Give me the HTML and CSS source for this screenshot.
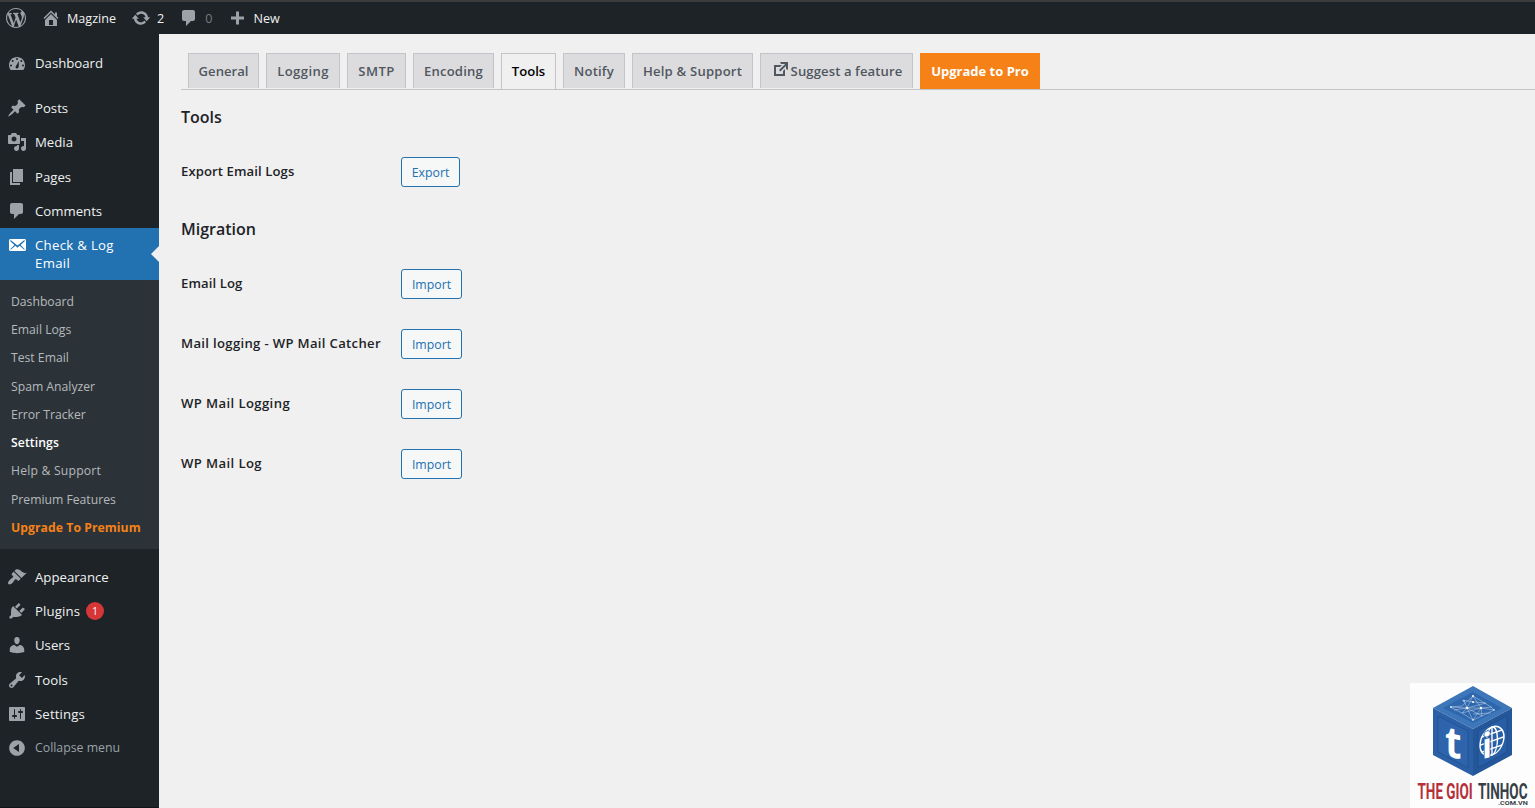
FILE: index.html
```html
<!DOCTYPE html>
<html lang="en">
<head>
<meta charset="utf-8">
<title>Settings – Check &amp; Log Email</title>
<link rel="stylesheet" href="styles.css">
</head>
<body>
<header class="adminbar">
  <svg class="ico wp" viewBox="0 0 20 20"><path d="M20 10c0-5.51-4.49-10-10-10C4.48 0 0 4.49 0 10c0 5.52 4.48 10 10 10 5.51 0 10-4.48 10-10zM7.78 15.37L4.37 6.22c.55-.02 1.17-.08 1.17-.08.5-.06.44-1.13-.06-1.11 0 0-1.45.11-2.37.11-.18 0-.37 0-.58-.01C4.12 2.69 6.87 1.11 10 1.11c2.33 0 4.45.87 6.05 2.34-.68-.11-1.65.39-1.65 1.58 0 .74.45 1.36.9 2.1.35.61.55 1.36.55 2.46 0 1.49-1.4 5-1.4 5l-3.03-8.37c.54-.02.82-.17.82-.17.5-.05.44-1.25-.06-1.22 0 0-1.44.12-2.38.12-.87 0-2.33-.12-2.33-.12-.5-.03-.56 1.2-.06 1.22l.92.08 1.26 3.41zM17.41 10c.24-.64.74-1.87.43-4.25.7 1.29 1.05 2.71 1.05 4.25 0 3.29-1.73 6.24-4.4 7.78.97-2.59 1.94-5.2 2.92-7.78zM6.1 18.09C3.12 16.65 1.11 13.53 1.11 10c0-1.3.23-2.48.72-3.59C3.25 10.3 4.67 14.2 6.1 18.09zm4.03-6.63l2.58 6.98c-.86.29-1.76.45-2.71.45-.79 0-1.57-.11-2.29-.33.81-2.38 1.62-4.74 2.42-7.1z"/></svg>
  <a class="bar-item site"><svg class="ico" viewBox="0 0 20 20"><path d="M16 8.5l1.53 1.53-1.06 1.06L10 4.6l-6.47 6.49-1.06-1.06L10 2.5l4 4v-2h2v4zm-6-2.46l6 5.99V18H4v-5.97zM12 17v-5H8v5h4z"/></svg><span>Magzine</span></a>
  <a class="bar-item updates"><svg class="ico" viewBox="0 0 20 20"><path d="M10.2 3.28c3.53 0 6.43 2.61 6.92 6h2.08l-3.5 4-3.5-4h2.32c-.45-1.97-2.21-3.45-4.32-3.45-1.45 0-2.73.71-3.54 1.78L4.95 5.66C6.23 4.2 8.11 3.28 10.2 3.28zm-.4 13.44c-3.52 0-6.43-2.61-6.92-6H.8l3.5-4c1.17 1.33 2.33 2.67 3.5 4H5.48c.45 1.97 2.21 3.45 4.32 3.45 1.45 0 2.73-.71 3.54-1.78l1.71 1.95c-1.28 1.46-3.15 2.38-5.25 2.38z"/></svg><span>2</span></a>
  <a class="bar-item pending"><svg class="ico" viewBox="0 0 20 20"><path d="M5 2h9c1.1 0 2 .9 2 2v7c0 1.1-.9 2-2 2h-2l-5 5v-5H5c-1.1 0-2-.9-2-2V4c0-1.1.9-2 2-2z"/></svg><span class="zero">0</span></a>
  <a class="bar-item new"><svg class="ico" viewBox="0 0 20 20"><path d="M17 8.500v3h-5v5H9v-5H4v-3h5v-5h3v5h5z"/></svg><span>New</span></a>
</header>
<div class="body">
  <nav class="sidebar">
    <a class="item"><svg class="ico" viewBox="0 0 20 20"><path fill-rule="evenodd" d="M3.76 17h12.48c1.1-1.37 1.76-3.11 1.76-5 0-4.42-3.58-8-8-8s-8 3.58-8 8c0 1.89.66 3.63 1.76 5zM9 6a1 1 0 1 1 2 0a1 1 0 1 1-2 0zM4.700 8a1 1 0 1 1 2 0a1 1 0 1 1-2 0zM3 12.500a1 1 0 1 1 2 0a1 1 0 1 1-2 0zM15 12.500a1 1 0 1 1 2 0a1 1 0 1 1-2 0zM13.300 8a1 1 0 1 1 2 0a1 1 0 1 1-2 0zM12 8L11.700 13.600C11.500 15 10.700 15.700 9.800 15.500C8.600 15.300 8.200 14.200 8.800 13.200z"/></svg><span>Dashboard</span></a>
    <div class="sep"></div>
    <a class="item"><svg class="ico" viewBox="0 0 20 20"><path d="M10.440 3.020l1.820-1.820 6.360 6.350-1.830 1.820c-1.050-.68-2.480-.57-3.410.36l-.75.75c-.92.93-1.040 2.350-.35 3.410l-1.830 1.820-2.410-2.410-2.800 2.790c-.42.42-3.380 2.710-3.800 2.290s1.860-3.390 2.280-3.810l2.790-2.790L4.100 9.360l1.830-1.820c1.050.69 2.480.57 3.400-.36l.75-.75c.93-.92 1.050-2.350.36-3.410z"/></svg><span>Posts</span></a>
    <a class="item"><svg class="ico" viewBox="0 0 20 20"><path d="M13 11V4c0-.55-.45-1-1-1h-1.670L9 1H5L3.670 3H2c-.55 0-1 .45-1 1v7c0 .55.45 1 1 1h10c.55 0 1-.45 1-1zM7 4.500c1.380 0 2.500 1.120 2.500 2.500S8.380 9.500 7 9.500 4.500 8.380 4.500 7 5.620 4.500 7 4.500zM14 6h5v10.500c0 1.380-1.120 2.500-2.500 2.500S14 17.880 14 16.500s1.120-2.500 2.500-2.500c.17 0 .34.02.5.05V9h-3V6zm-4 8.050V13h2v3.500c0 1.380-1.120 2.500-2.500 2.500S7 17.880 7 16.500 8.120 14 9.500 14c.17 0 .34.02.5.05z"/></svg><span>Media</span></a>
    <a class="item"><svg class="ico" viewBox="0 0 20 20"><path d="M6 15V2h10v13H6zm-1 1h8v2H3V5h2v11z"/></svg><span>Pages</span></a>
    <a class="item"><svg class="ico" viewBox="0 0 20 20"><path d="M5 2h9c1.100 0 2 .9 2 2v7c0 1.100-.9 2-2 2h-2l-5 5v-5H5c-1.100 0-2-.9-2-2V4c0-1.100.9-2 2-2z"/></svg><span>Comments</span></a>
    <a class="item current"><svg class="ico" viewBox="0 0 20 20"><path d="M19 14.500v-9c0-.83-.67-1.500-1.500-1.500H3.490c-.83 0-1.500.67-1.500 1.500v9c0 .83.67 1.500 1.500 1.500H17.500c.83 0 1.500-.67 1.500-1.500zm-1.310-9.110c.33.33.15.67-.03.84L13.600 9.950l3.900 4.060c.12.14.2.36.06.51-.13.16-.43.15-.56.05l-4.370-3.730-2.140 1.950-2.130-1.950-4.370 3.730c-.13.1-.43.11-.56-.05-.14-.15-.06-.37.06-.51l3.900-4.060-4.060-3.720c-.18-.17-.36-.51-.03-.84s.67-.17.95.07l6.240 5.040 6.250-5.040c.28-.24.62-.4.95-.07z"/></svg><span class="check">Check &amp; Log<br>Email</span></a>
    <div class="submenu">
      <a>Dashboard</a><a>Email Logs</a><a>Test Email</a><a>Spam Analyzer</a><a>Error Tracker</a><a class="on">Settings</a><a class="wide">Help &amp; Support</a><a>Premium Features</a><a class="upgrade">Upgrade To Premium</a>
    </div>
    <div class="sep"></div>
    <a class="item"><svg class="ico" viewBox="0 0 20 20"><path d="M14.480 11.060L7.410 3.990l1.500-1.500c.5-.56 2.300-.47 3.510.32 1.210.8 1.430 1.280 2.910 2.100 1.180.64 2.450 1.260 4.450.85zm-.71.71L6.700 4.700 4.930 6.470c-.39.39-.39 1.020 0 1.410l1.060 1.060c.39.39.39 1.030 0 1.420-.6.6-1.430 1.110-2.210 1.690-.35.26-.7.53-1.010.84C1.430 14.230.4 16.080 1.400 17.070c.99 1 2.840-.03 4.180-1.360.31-.31.58-.66.85-1.020.57-.78 1.080-1.610 1.690-2.210.39-.39 1.020-.39 1.410 0l1.060 1.060c.39.39 1.020.39 1.410 0z"/></svg><span>Appearance</span></a>
    <a class="item"><svg class="ico" viewBox="0 0 20 20"><path d="M13.110 4.360L9.870 7.600 8 5.730l3.240-3.240c.35-.34 1.050-.2 1.560.32.52.51.66 1.210.31 1.550zm-8 1.770l.91-1.120 9.010 9.010-1.190.84c-.71.71-2.630 1.160-3.820 1.160H6.140L4.900 17.260c-.59.59-1.540.59-2.120 0-.59-.58-.59-1.530 0-2.120l1.240-1.240v-3.880c0-1.130.4-3.190 1.090-3.890zm7.260 3.970l3.240-3.240c.34-.35 1.040-.21 1.550.31.52.51.66 1.210.31 1.550l-3.240 3.250z"/></svg><span class="plugins">Plugins</span><b class="count">1</b></a>
    <a class="item"><svg class="ico" viewBox="0 0 20 20"><path d="M10 9.250c-2.270 0-2.730-3.440-2.730-3.440C7 4.020 7.820 2 9.970 2c2.160 0 2.980 2.020 2.710 3.810 0 0-.41 3.440-2.680 3.440zm0 2.570L12.720 10c2.390 0 4.520 2.330 4.520 4.530v2.490s-3.650 1.130-7.240 1.130c-3.650 0-7.240-1.130-7.240-1.130v-2.490c0-2.250 1.940-4.480 4.470-4.480z"/></svg><span>Users</span></a>
    <a class="item"><svg class="ico" viewBox="0 0 20 20"><path d="M16.680 9.770c-1.340 1.340-3.300 1.670-4.950.99l-5.410 6.520c-.99.99-2.590.99-3.580 0s-.99-2.590 0-3.570l6.520-5.420c-.68-1.650-.35-3.610.99-4.950 1.280-1.280 3.120-1.620 4.720-1.060l-2.890 2.890 2.820 2.820 2.860-2.870c.53 1.580.18 3.390-1.080 4.650zM3.810 16.210c.4.39 1.040.39 1.430 0 .4-.4.4-1.040 0-1.430-.39-.4-1.030-.4-1.430 0-.39.39-.39 1.030 0 1.430z"/></svg><span>Tools</span></a>
    <a class="item"><svg class="ico" viewBox="0 0 20 20"><path d="M18 16V4c0-.55-.45-1-1-1H3c-.55 0-1 .45-1 1v12c0 .55.45 1 1 1h14c.55 0 1-.45 1-1zM8 11h1c.55 0 1 .45 1 1s-.45 1-1 1H8v1.500c0 .28-.22.5-.5.5s-.5-.22-.5-.5V13H6c-.55 0-1-.45-1-1s.45-1 1-1h1V5.500c0-.28.22-.5.5-.5s.5.22.5.5V11zm5-2h-1c-.55 0-1-.45-1-1s.45-1 1-1h1V5.500c0-.28.22-.5.5-.5s.5.22.5.5V7h1c.55 0 1 .45 1 1s-.45 1-1 1h-1v5.500c0 .28-.22.5-.5.5s-.5-.22-.5-.5V9z"/></svg><span class="settings">Settings</span></a>
    <a class="item collapse"><svg class="ico" viewBox="0 0 20 20"><path fill-rule="evenodd" d="M10 2.160c4.330 0 7.840 3.510 7.840 7.840s-3.510 7.840-7.840 7.840S2.160 14.330 2.160 10 5.710 2.160 10 2.160zm2 11.720V6.120L6.180 9.970z"/></svg><span>Collapse menu</span></a>
  </nav>
  <main class="content">
    <div class="tabs">
      <a class="tab general">General</a><a class="tab logging">Logging</a><a class="tab smtp">SMTP</a><a class="tab encoding">Encoding</a><a class="tab tools active">Tools</a><a class="tab notify">Notify</a><a class="tab help">Help &amp; Support</a><a class="tab suggest"><svg viewBox="0 0 20 20"><path d="M9 3h8v8l-2-1V6.920l-5.600 5.590-1.410-1.410L14.080 5H10zm3 12v-3l2-2v7H3V6h8L9 8H5v7h7z"/></svg>Suggest a feature</a><a class="tab pro">Upgrade to Pro</a>
    </div>
    <h2>Tools</h2>
    <div class="row"><span class="label">Export Email Logs</span><button class="btn export">Export</button></div>
    <h2>Migration</h2>
    <div class="row"><span class="label">Email Log</span><button class="btn">Import</button></div>
    <div class="row"><span class="label catcher">Mail logging - WP Mail Catcher</span><button class="btn">Import</button></div>
    <div class="row"><span class="label wpmail">WP Mail Logging</span><button class="btn">Import</button></div>
    <div class="row"><span class="label wpmail">WP Mail Log</span><button class="btn">Import</button></div>
  </main>
</div>
<svg class="brand" viewBox="0 0 125 125">
  <rect width="125" height="125" fill="#fdfdfd"/>
  <path fill="#3d77b9" d="M63 3L102 25 63 46 23 25z"/>
  <path fill="#2b5fa6" d="M23 25L63 46V93L23 72z"/>
  <path fill="#24569a" d="M102 25L63 46V93L102 72z"/>
  <path fill="#2e67ad" d="M63 9L92 25 63 40 33 25z"/>
  <path fill="#2d64ab" stroke="#215190" stroke-width=".8" d="M28 33L58 48V85L28 69z"/>
  <path fill="#285ea5" stroke="#1f4d8b" stroke-width=".8" d="M97 33L68 48V85L97 69z"/>
  <path class="net" d="M40 24L52 23 63 13 81 24 84 27 72 33 63 37 52 30zM40 24L57 25 71 25 84 27M54 18L57 25 52 30M63 13L71 25 63 37M52 17L63 19 76 20M57 25L63 13M57 25L72 33 71 25M57 25L63 37M44 27L57 25M76 20L57 25M52 30L71 25 82 24M63 31L81 30"/>
  <g fill="#fff"><circle cx="41" cy="24" r=".8"/><circle cx="54" cy="18" r=".8"/><circle cx="63" cy="13" r="1"/><circle cx="57" cy="25" r="1.300"/><circle cx="71" cy="25" r="1.200"/><circle cx="63" cy="37" r=".8"/><circle cx="84" cy="27" r=".8"/><circle cx="63" cy="19" r="1"/></g>
  <g class="globe" transform="matrix(1 -.35 0 1 82 58)"><ellipse rx="12" ry="14"/><ellipse rx="5.500" ry="14"/><path d="M0-14V14M-12 0H12M-10-7.500H10M-10 7.500H10"/></g>
  <text class="mark" transform="matrix(.95 .19 0 1.080 35 73)">t</text>
  <text class="mark dot" transform="matrix(.95 -.24 0 1 72.500 76)">i</text>
  <text class="name red" transform="translate(7.500 115.500) scale(.6 1)">THE GIOI</text>
  <text class="name" transform="translate(68 115.500) scale(.6 1)">TINHOC</text>
  <text class="domain" transform="translate(88 122) scale(1.200 1)">.COM.VN</text>
</svg>
</body>
</html>
```
FILE: styles.css
```css
* { box-sizing: border-box; }
body {
  margin: 0;
  width: 1535px;
  height: 808px;
  overflow: hidden;
  background: #f0f0f0;
  font-family: "Open Sans", "Noto Sans", sans-serif;
  color: #1d2327;
}
.ico { width: 20px; height: 20px; flex: none; fill: #9ca2a7; }
.adminbar {
  height: 34px;
  border-top: 2px solid #3c3c3c;
  background: #1d2327;
  color: #f0f0f1;
  display: flex;
  align-items: center;
  padding-left: 6px;
  font-size: 12.6px;
}
.bar-item { display: flex; align-items: center; gap: 6px; }
.site { margin-left: 15px; }
.updates { margin-left: 15px; }
.pending { margin-left: 15px; }
.new { margin-left: 15px; }
.zero { color: #787c82; }
.body { display: flex; height: 774px; }
.sidebar {
  width: 159px;
  flex: none;
  background: #1d2327;
  padding-top: 12px;
  border-bottom: 1px solid #111518;
}
.item {
  display: flex;
  align-items: center;
  height: 34.2px;
  padding-left: 7px;
  gap: 8px;
  font-size: 13.2px;
  line-height: 18px;
  color: #f0f0f1;
}
.sep { height: 11px; }
.current {
  height: 52px;
  background: #2271b1;
  color: #fff;
  align-items: flex-start;
  padding-top: 8px;
  position: relative;
}
.check { letter-spacing: .3px; }
.settings { letter-spacing: .12px; }
.current .ico { fill: #fff; margin-top: -1px; }
.current::after {
  content: "";
  position: absolute;
  right: 0;
  top: 18px;
  border: 8px solid transparent;
  border-left: 0;
  border-right-color: #f0f0f0;
}
.submenu {
  background: #2c3338;
  padding: 8px 0 6px 11px;
  height: 269px;
}
.submenu a {
  display: block;
  height: 28.25px;
  line-height: 28.6px;
  font-size: 12.2px;
  color: #b5b9bd;
  white-space: nowrap;
}
.submenu .wide { letter-spacing: .2px; }
.submenu .on { color: #fff; font-weight: 600; letter-spacing: .1px; }
.submenu .upgrade { color: #f58117; font-weight: 700; letter-spacing: .06px; }
.plugins { letter-spacing: .12px; }
.count {
  width: 18px;
  height: 18px;
  margin-left: -2px;
  border-radius: 50%;
  background: #d63638;
  color: #fff;
  font-size: 10.5px;
  font-weight: 400;
  text-align: center;
}
.collapse { color: #9ca2a7; font-size: 12.3px; padding-top: 1px; }
.content { flex: 1; padding: 19px 0 0 22px; }
.tabs {
  display: flex;
  gap: 7px;
  height: 37px;
  padding-left: 7px;
  border-bottom: 1px solid #c3c4c7;
}
.tab {
  height: 35px;
  display: flex;
  align-items: center;
  justify-content: center;
  border: 1px solid #c3c4c7;
  border-bottom: 0;
  background: #dcdcde;
  color: #50575e;
  font-size: 13.1px;
  font-weight: 600;
  white-space: nowrap;
}
.general { width: 71px; }
.logging { width: 74px; letter-spacing: .4px; }
.smtp { width: 59px; letter-spacing: .4px; }
.encoding { width: 81px; letter-spacing: .2px; }
.tools { width: 55px; padding-bottom: 2px; }
.notify { width: 62px; letter-spacing: .2px; }
.help { width: 121px; letter-spacing: .2px; }
.suggest { width: 153px; letter-spacing: .1px; }
.suggest svg { width: 20px; height: 20px; fill: #50575e; margin: -5px 0 0 0; }
.active { height: 36px; background: #f0f0f0; color: #000; }
.pro { width: 120px; height: 36px; border: 0; background: #f58117; color: #fff; font-weight: 700; font-size: 13px; }
h2 { margin: 0; height: 52px; padding-top: 15px; font-size: 16px; line-height: 24px; font-weight: 600; }
.row { display: flex; align-items: center; height: 60px; }
.label { width: 220px; padding-bottom: 2px; font-size: 13.1px; font-weight: 600; letter-spacing: .1px; white-space: nowrap; }
.catcher { letter-spacing: .33px; }
.wpmail { letter-spacing: .4px; }
.btn {
  width: 61px;
  height: 30px;
  padding: 0;
  border: 1px solid #2271b1;
  border-radius: 3px;
  background: #f6f7f7;
  color: #2271b1;
  font-family: inherit;
  font-size: 12.3px;
}
.export { width: 59px; }
.brand { position: absolute; left: 1410px; top: 683px; width: 125px; height: 125px; }
.net { fill: none; stroke: #c5d6ea; stroke-width: .5; }
.globe { fill: none; stroke: #fff; stroke-width: 1.4; }
.mark { font: 700 40px "Open Sans", sans-serif; fill: #fff; }
.dot { font: 700 36px Roboto, sans-serif; stroke: #2c63aa; stroke-width: 1.6px; paint-order: stroke; }
.name { font: 700 22.5px Roboto, sans-serif; fill: #354047; }
.red { fill: #b5303a; }
.domain { font: 700 6px Roboto, sans-serif; fill: #354047; }
```
